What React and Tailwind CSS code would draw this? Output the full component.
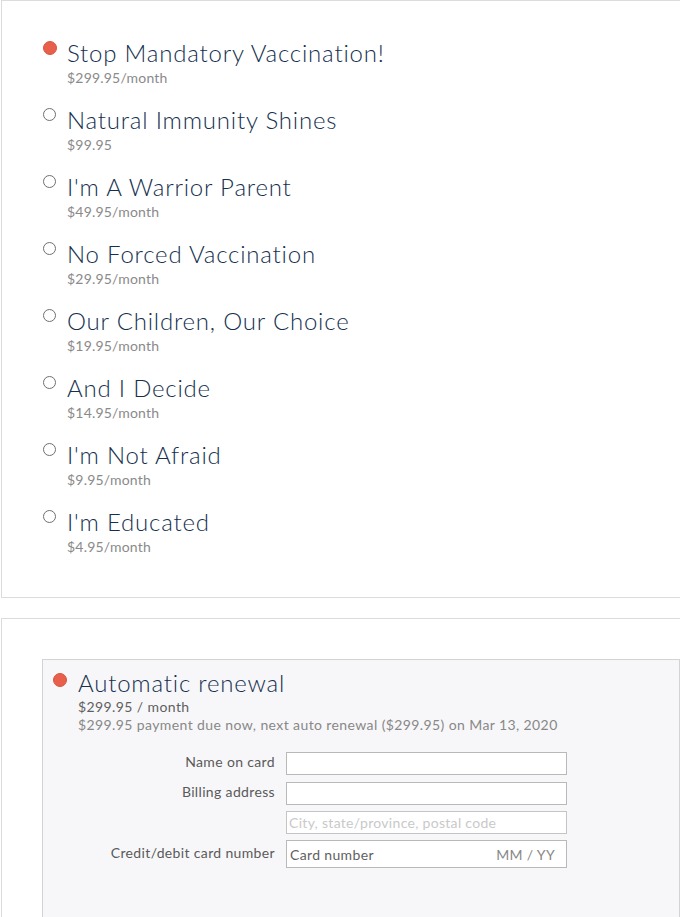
import React from 'react';

const plans = [
  { name: 'Stop Mandatory Vaccination!', price: '$299.95/month', selected: true },
  { name: 'Natural Immunity Shines', price: '$99.95' },
  { name: "I'm A Warrior Parent", price: '$49.95/month' },
  { name: 'No Forced Vaccination', price: '$29.95/month' },
  { name: 'Our Children, Our Choice', price: '$19.95/month' },
  { name: 'And I Decide', price: '$14.95/month' },
  { name: "I'm Not Afraid", price: '$9.95/month' },
  { name: "I'm Educated", price: '$4.95/month' },
];

function Radio({ on }) {
  return on ? (
    <span className="block w-[14px] h-[14px] rounded-full bg-[#e8604c] border border-[#d9553f]" />
  ) : (
    <span className="block w-[13px] h-[13px] rounded-full bg-white border border-[#6f6f6f]" />
  );
}

function Field({ label, className, children }) {
  return (
    <div className={`flex items-center ${className || ''}`}>
      <div className="w-[233px] pr-[11px] pb-[3px] text-right text-[14px] leading-[18px] tracking-[0.35px] text-[#5a5a5a]">{label}</div>
      {children}
    </div>
  );
}

export default function App() {
  return (
    <div className="w-[680px] h-[917px] overflow-hidden bg-white font-['Lato',sans-serif]">
      {/* plan list */}
      <div className="ml-px w-[720px] h-[598px] border border-[#dcdcdc] pt-[37px] pl-[41px]">
        {plans.map((p) => (
          <div key={p.name} className="flex h-[67px]">
            <div className="pt-[3px] w-[24px]">
              <Radio on={p.selected} />
            </div>
            <div>
              <div className="text-[24px] leading-[30px] font-light tracking-[0.8px] text-[#15304f]">{p.name}</div>
              <div className="mt-[1px] text-[14px] leading-[18px] tracking-[0.2px] text-[#8a8a8a]">{p.price}</div>
            </div>
          </div>
        ))}
      </div>

      {/* payment */}
      <div className="ml-px mt-[20px] w-[720px] h-[320px] border border-[#dcdcdc] pt-[40px] pl-[40px]">
        <div className="w-[638px] h-[300px] bg-[#f7f7f9] border border-[#d3d3d3] pt-[8px] pl-[10px]">
          <div className="flex">
            <div className="pt-[5px] w-[25px]">
              <Radio on />
            </div>
            <div>
              <div className="text-[24px] leading-[30px] font-light tracking-[0.8px] text-[#15304f]">Automatic renewal</div>
              <div className="text-[14px] leading-[18px] tracking-[0.4px] text-[#5f5f5f]">$299.95 / month</div>
              <div className="text-[14px] leading-[18px] tracking-[0.4px] text-[#888]">
                $299.95 payment due now, next auto renewal ($299.95) on Mar 13, 2020
              </div>
            </div>
          </div>
          <div className="mt-[18px] flex flex-col">
            <Field label="Name on card">
              <div className="w-[281px] h-[23px] bg-white border border-[#b9b9b9]" />
            </Field>
            <Field label="Billing address" className="mt-[7px]">
              <div className="w-[281px] h-[23px] bg-white border border-[#b9b9b9]" />
            </Field>
            <Field label="" className="mt-[6px]">
              <div className="w-[281px] h-[23px] bg-white border border-[#c4c4c4] px-[2px] text-[14px] leading-[21px] tracking-[0.3px] text-[#c9c9c9]">
                City, state/province, postal code
              </div>
            </Field>
            <Field label="Credit/debit card number" className="mt-[6px]">
              <div className="w-[281px] h-[28px] bg-white border border-[#b9b9b9] flex items-center justify-between pl-[3px] pr-[11px] text-[14px] tracking-[0.35px] text-[#5f5f5f]">
                <span>Card number</span>
                <span className="text-[#888]">MM / YY</span>
              </div>
            </Field>
          </div>
        </div>
      </div>
    </div>
  );
}
